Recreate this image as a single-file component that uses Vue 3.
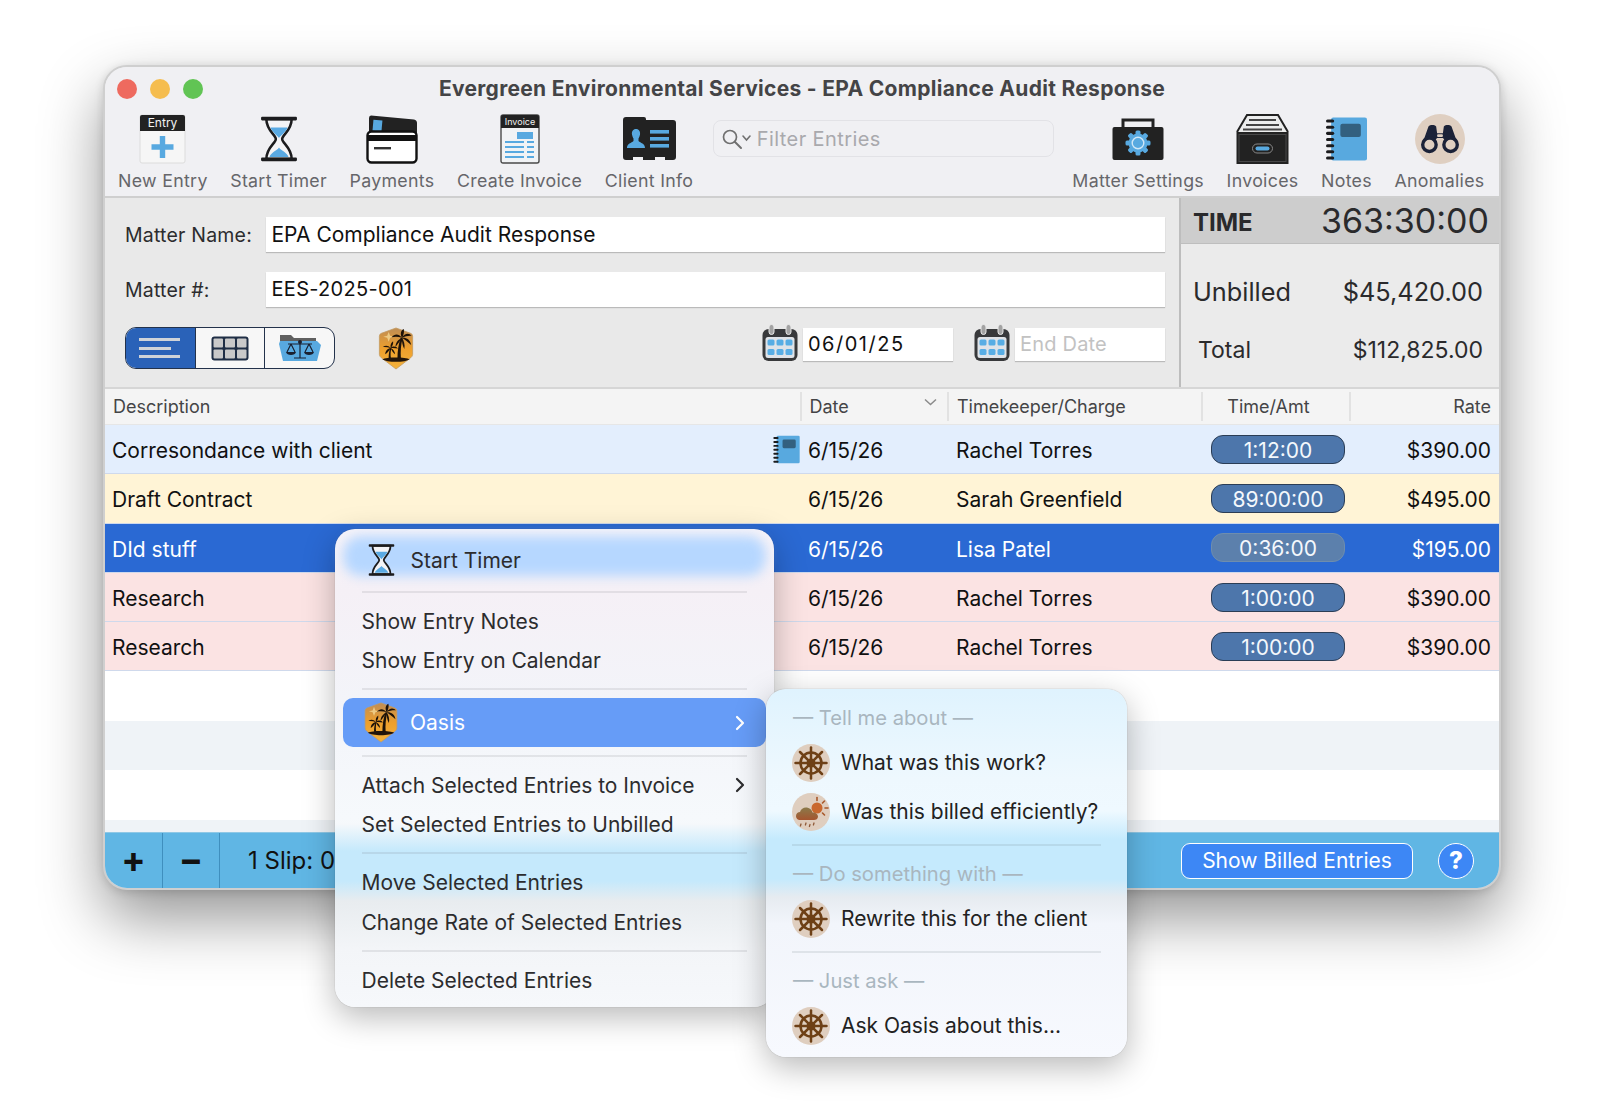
<template>
  <div class="page">
    <svg class="sprites" width="0" height="0" aria-hidden="true">
      <defs>
        <linearGradient id="shieldFill" x1="0" y1="0" x2="0" y2="1">
          <stop offset="0" stop-color="#bf8d55" />
          <stop offset="0.5" stop-color="#ee9f2c" />
          <stop offset="1" stop-color="#f3b23c" />
        </linearGradient>
        <linearGradient id="cloudFill" x1="0" y1="0" x2="0" y2="1">
          <stop offset="0" stop-color="#8a7a4a" />
          <stop offset="1" stop-color="#a5552f" />
        </linearGradient>
        <symbol id="hourglass" viewBox="0 0 36 44">
          <path d="M6 3C6 14 15 18 15 22C15 26 6 30 6 41H30C30 30 21 26 21 22C21 18 30 14 30 3Z" fill="#f4f4f6" stroke="#1c1c1e" stroke-width="2.4" />
          <path d="M10 11H26C25 15 20 18 18 21C16 18 11 15 10 11Z" fill="#5aaae3" />
          <path d="M9 39C10 35 16 33 18 30C20 33 26 35 27 39Z" fill="#5aaae3" />
          <rect x="1" y="1" width="34" height="3.4" rx="1" fill="#1c1c1e" />
          <rect x="1" y="39.6" width="34" height="3.4" rx="1" fill="#1c1c1e" />
        </symbol>
        <symbol id="palm" viewBox="0 0 36 44">
          <path d="M18 1L33 6.500Q35 7.200 35 9.500V28Q35 30 33 31.500L18 43L3 31.500Q1 30 1 28V9.500Q1 7.200 3 6.500Z" fill="url(#shieldFill)" stroke="#c29a62" stroke-width="0.800" />
          <path d="M9 9L10.500 5L12 9L16 10L12 11L10.500 15L9 11L5 10Z" fill="#f6dc9a" opacity="0.75" />
          <path d="M4 33C8 30.500 28 30.500 32 33C28 36.500 8 36.500 4 33Z" fill="#21140a" />
          <path d="M19.500 32C19.500 25 20.500 17 23 11L24.800 11.500C23 18 22.500 25 23 32Z" fill="#1d1209" />
          <path d="M24 11C20.500 6.500 16.500 7 13.500 10.500C17.500 9.500 21 10 24 11ZM24 11C22 6.500 23 3.500 26 2C26.500 5 26 8.500 24 11ZM24 11C27 6 31.500 6 34 9C30.500 8.800 27 9.500 24 11ZM24 11C28.500 10.500 33 13 33.500 18.500C30.500 15.500 27 13 24 11ZM24 11C21 12.500 17.500 15.500 17.500 20.500C20 17 22.500 14 24 11ZM24 11C26 14 27.500 18 26.500 22.500C24.500 19 24 15 24 11Z" fill="#1d1209" />
          <path d="M10.500 32C10.500 28 11 25 12 21.500L13.300 21.900C12.300 25 12.300 28.500 12.800 32Z" fill="#1d1209" />
          <path d="M12.500 21.500C10 18.500 7 18.500 4.500 20.500C7.500 20.300 10 20.700 12.500 21.500ZM12.500 21.500C12 18 13 16 15 14.500C15.500 17 14.500 19.500 12.500 21.500ZM12.500 21.500C15 19 18.500 19.800 20 22C17.500 21.500 15 21.300 12.500 21.500ZM12.500 21.500C9.500 22 7 24.500 7 28C9.500 26 11.500 24 12.500 21.500ZM12.500 21.500C15 22.500 17 25 17 28C15 26.500 13.500 24 12.500 21.500Z" fill="#1d1209" />
        </symbol>
        <symbol id="notes" viewBox="0 0 40 44">
          <rect x="5" y="1" width="35" height="42" rx="2" fill="#58a9df" />
          <rect x="14" y="7" width="20" height="13" rx="2" fill="#33607f" />
          <g fill="#1c1c1e">
            <rect x="0" y="3" width="8" height="3" rx="1.5" />
            <rect x="0" y="9" width="8" height="3" rx="1.5" />
            <rect x="0" y="15" width="8" height="3" rx="1.5" />
            <rect x="0" y="21" width="8" height="3" rx="1.5" />
            <rect x="0" y="27" width="8" height="3" rx="1.5" />
            <rect x="0" y="33" width="8" height="3" rx="1.5" />
            <rect x="0" y="39" width="8" height="3" rx="1.5" />
          </g>
        </symbol>
        <symbol id="calendar" viewBox="0 0 36 37">
          <rect x="0.5" y="5" width="35" height="32" rx="6" fill="#38393b" />
          <rect x="3.5" y="13" width="29" height="21" rx="2.5" fill="#dfe3e8" />
          <rect x="7" y="0.5" width="5" height="10" rx="2.5" fill="#a3a3a3" stroke="#e9e9e9" />
          <rect x="24" y="0.5" width="5" height="10" rx="2.5" fill="#a3a3a3" stroke="#e9e9e9" />
          <g fill="#58ade4">
            <rect x="5.5" y="15.5" width="7" height="6" rx="1.5" />
            <rect x="14.5" y="15.5" width="7" height="6" rx="1.5" />
            <rect x="23.5" y="15.5" width="7" height="6" rx="1.5" />
            <rect x="5.5" y="25" width="7" height="6" rx="1.5" />
            <rect x="14.5" y="25" width="7" height="6" rx="1.5" />
            <rect x="23.5" y="25" width="7" height="6" rx="1.5" />
          </g>
        </symbol>
        <symbol id="wheel" viewBox="0 0 38 38">
          <circle cx="19" cy="19" r="19" fill="#dfcebf" />
          <g stroke="#6e4016" stroke-width="2.5" fill="none" stroke-linecap="round">
            <circle cx="19" cy="19" r="10.5" />
            <line x1="19" y1="3.5" x2="19" y2="34.5" />
            <line x1="3.5" y1="19" x2="34.5" y2="19" />
            <line x1="8" y1="8" x2="30" y2="30" />
            <line x1="30" y1="8" x2="8" y2="30" />
          </g>
          <circle cx="19" cy="19" r="4.500" fill="#6e4016" />
        </symbol>
        <symbol id="weather" viewBox="0 0 38 38">
          <circle cx="19" cy="19" r="19" fill="#dfcebf" />
          <circle cx="25" cy="15" r="5.5" fill="#c9682e" />
          <g stroke="#a8582a" stroke-width="1.6" stroke-linecap="round">
            <line x1="25" y1="4.5" x2="25" y2="7.5" />
            <line x1="32.5" y1="8" x2="30.5" y2="10" />
            <line x1="36" y1="15" x2="33" y2="15" />
            <line x1="32.5" y1="22" x2="30.5" y2="20" />
          </g>
          <path d="M8 27C5 27 4 24.500 4 23C4 20.500 6 19 8 19C9 15.500 12 14 15 14.500C18 15 20 17 20.500 19.500C23 19 26 21 26 23.500C26 26 24 27 22 27Z" fill="url(#cloudFill)" />
          <g stroke="#8f5a38" stroke-width="1.300" stroke-linecap="round">
            <line x1="9" y1="31" x2="8.400" y2="33" />
            <line x1="14" y1="30" x2="13.400" y2="32" />
            <line x1="18" y1="31.500" x2="17.400" y2="33.500" />
            <line x1="22" y1="30" x2="21.400" y2="32" />
          </g>
        </symbol>
      </defs>
    </svg>

    <div class="window">
      <header class="chrome">
        <div class="titlebar">
          <div class="lights">
            <span class="light light-red"></span>
            <span class="light light-yellow"></span>
            <span class="light light-green"></span>
          </div>
          <div class="title">Evergreen Environmental Services - EPA Compliance Audit Response</div>
        </div>
        <div class="toolbar">
          <div class="tool">
            <svg class="tool-icon" width="47" height="50" viewBox="0 0 47 50">
              <rect x="1" y="1" width="45" height="48" rx="2" fill="#f6f6f6" stroke="#dcdcdc" />
              <path d="M1 3a2 2 0 0 1 2-2h41a2 2 0 0 1 2 2v14H1Z" fill="#222" />
              <text x="23.500" y="13" text-anchor="middle" class="icon-text entry-text">Entry</text>
              <path d="M20.800 22h5.400v8.300h8.300v5.400h-8.300V44h-5.400v-8.300h-8.300v-5.400h8.300Z" fill="#58a9e0" />
            </svg>
            <span>New Entry</span>
          </div>
          <div class="tool">
            <svg class="tool-icon" width="38" height="46"><use href="#hourglass" /></svg>
            <span>Start Timer</span>
          </div>
          <div class="tool">
            <svg class="tool-icon" width="52" height="50" viewBox="0 0 52 50">
              <path d="M5 1.500L48 5.500Q51 6 51 9V26H3V4Q3 1.500 5 1.500Z" fill="#222" />
              <rect x="7" y="6" width="9" height="11" fill="#58a9e0" transform="rotate(5 11 11)" />
              <rect x="1.500" y="17.500" width="49" height="31" rx="4" fill="#fff" stroke="#111" stroke-width="2.400" />
              <rect x="1.500" y="21" width="49" height="6" fill="#111" />
              <rect x="8" y="33" width="17" height="2.400" fill="#333" />
            </svg>
            <span>Payments</span>
          </div>
          <div class="tool">
            <svg class="tool-icon" width="40" height="50" viewBox="0 0 40 50">
              <rect x="1" y="1" width="38" height="48" rx="2" fill="#f1f3f5" stroke="#4a4a4a" stroke-width="1.400" />
              <path d="M1 3a2 2 0 0 1 2-2h34a2 2 0 0 1 2 2v11H1Z" fill="#222" />
              <text x="20" y="11" text-anchor="middle" class="icon-text invoice-text">Invoice</text>
              <rect x="17" y="18" width="16" height="7" fill="#58a9e0" />
              <g fill="#58a9e0">
                <rect x="5" y="27" width="19" height="2" />
                <rect x="27" y="27" width="7" height="2" />
                <rect x="5" y="32" width="19" height="2" />
                <rect x="27" y="32" width="7" height="2" />
                <rect x="5" y="37" width="19" height="2" />
                <rect x="27" y="37" width="7" height="2" />
                <rect x="5" y="42" width="19" height="2" />
                <rect x="27" y="42" width="7" height="2" />
              </g>
            </svg>
            <span>Create Invoice</span>
          </div>
          <div class="tool">
            <svg class="tool-icon" width="53" height="44" viewBox="0 0 53 44">
              <path d="M3 0H21Q23 0 23 2V3H50Q53 3 53 6V40Q53 43 50 43H42V40H32V43H20V40H10V43H3Q0 43 0 40V3Q0 0 3 0Z" fill="#222" />
              <path d="M13 12C16 12 17.500 14.500 17 17.500C16.800 19 16 20.500 15.500 21.500V24C17.500 26 22 26.500 22 31H4C4 26.500 8.500 26 10.500 24V21.500C10 20.500 9.200 19 9 17.500C8.500 14.500 10 12 13 12Z" fill="#58a9e0" />
              <rect x="27" y="13" width="19" height="3.600" fill="#58a9e0" />
              <rect x="27" y="20" width="19" height="3.600" fill="#58a9e0" />
              <rect x="27" y="27" width="19" height="3.600" fill="#58a9e0" />
            </svg>
            <span>Client Info</span>
          </div>
          <div class="search">
            <svg width="32" height="22" viewBox="0 0 32 22">
              <circle cx="9" cy="9" r="6.500" fill="none" stroke="#707070" stroke-width="1.700" />
              <line x1="14" y1="14" x2="20" y2="20" stroke="#707070" stroke-width="2" stroke-linecap="round" />
              <path d="M22 8l3.500 4 3.500-4" fill="none" stroke="#707070" stroke-width="1.600" stroke-linecap="round" />
            </svg>
            <span>Filter Entries</span>
          </div>
          <div class="tool">
            <svg class="tool-icon" width="52" height="42" viewBox="0 0 52 42">
              <path d="M11 10V2H41V10" fill="none" stroke="#222" stroke-width="3" />
              <rect x="0.500" y="9" width="51" height="33" rx="2" fill="#222" />
              <g fill="#58a9e0">
                <circle cx="26" cy="25" r="9.500" />
                <rect x="23.500" y="12.500" width="5" height="25" rx="1.500" />
                <rect x="13.500" y="22.500" width="25" height="5" rx="1.500" />
                <rect x="23.500" y="12.500" width="5" height="25" rx="1.500" transform="rotate(45 26 25)" />
                <rect x="23.500" y="12.500" width="5" height="25" rx="1.500" transform="rotate(-45 26 25)" />
              </g>
              <circle cx="26" cy="25" r="5.800" fill="#58a9e0" stroke="#cfe7f7" stroke-width="1.400" />
            </svg>
            <span>Matter Settings</span>
          </div>
          <div class="tool">
            <svg class="tool-icon" width="53" height="50" viewBox="0 0 53 50">
              <path d="M1 18L11 1H42L52 18" fill="#eceded" stroke="#222" stroke-width="2" />
              <g fill="#444">
                <rect x="13" y="5" width="27" height="2" />
                <rect x="10" y="10" width="33" height="2" />
                <rect x="7" y="14.500" width="39" height="2" />
              </g>
              <rect x="0.500" y="18" width="52" height="32" fill="#222" />
              <rect x="3" y="20.500" width="47" height="27" fill="none" stroke="#484848" />
              <rect x="16.500" y="30" width="20" height="9" rx="4.500" fill="#222" stroke="#888" />
              <rect x="19.500" y="32.500" width="14" height="4" rx="2" fill="#58a9e0" />
            </svg>
            <span>Invoices</span>
          </div>
          <div class="tool">
            <svg class="tool-icon" width="41" height="44"><use href="#notes" /></svg>
            <span>Notes</span>
          </div>
          <div class="tool">
            <svg class="tool-icon" width="52" height="52" viewBox="0 0 52 52">
              <circle cx="26" cy="26" r="26" fill="#dfcfc1" />
              <g fill="#1b2238">
                <path d="M14 13C16 11 20 11 22 13L23 20H29L30 13C32 11 36 11 38 13L44 30H34L29 25H23L18 30H8Z" />
              </g>
              <circle cx="15" cy="32" r="7" fill="#dfcfc1" stroke="#1b2238" stroke-width="3.500" />
              <circle cx="37" cy="32" r="7" fill="#dfcfc1" stroke="#1b2238" stroke-width="3.500" />
              <rect x="23" y="21" width="6" height="3" rx="1" fill="#dfcfc1" />
            </svg>
            <span>Anomalies</span>
          </div>
        </div>
      </header>

      <section class="matter">
        <div class="matter-form">
          <div class="form-row">
            <label>Matter Name:</label>
            <div class="field big">EPA Compliance Audit Response</div>
          </div>
          <div class="form-row">
            <label>Matter #:</label>
            <div class="field mono">EES-2025-001</div>
          </div>
          <div class="form-tools">
            <div class="segments">
              <div class="segment active">
                <svg width="42" height="24" viewBox="0 0 42 24">
                  <g fill="#cfd3d8">
                    <rect x="0" y="2" width="41" height="3" />
                    <rect x="0" y="11" width="32" height="3" />
                    <rect x="0" y="19" width="41" height="3" />
                  </g>
                </svg>
              </div>
              <div class="segment">
                <svg width="40" height="27" viewBox="0 0 40 27">
                  <rect x="1.500" y="1.500" width="37" height="24" rx="3" fill="#1f2e45" />
                  <g fill="#c9c9c9">
                    <rect x="3.500" y="3.500" width="9.500" height="9" rx="1" />
                    <rect x="15" y="3.500" width="10" height="9" rx="1" />
                    <rect x="27" y="3.500" width="9.500" height="9" rx="1" />
                    <rect x="3.500" y="14.500" width="9.500" height="9" rx="1" />
                    <rect x="15" y="14.500" width="10" height="9" rx="1" />
                    <rect x="27" y="14.500" width="9.500" height="9" rx="1" />
                  </g>
                </svg>
              </div>
              <div class="segment">
                <svg width="42" height="28" viewBox="0 0 42 28">
                  <path d="M1 1H12L15 4H37V10H1Z" fill="#5f5f5f" />
                  <path d="M1 7H38L42 11L38 27H4L0 10Z" fill="#58a9e0" />
                  <g stroke="#1a2030" stroke-width="1.200" fill="none">
                    <line x1="9" y1="10" x2="33" y2="10" />
                    <line x1="21" y1="8" x2="21" y2="24" />
                    <line x1="15" y1="24" x2="27" y2="24" />
                    <path d="M12 10L8 18M12 10L16 18M30 10L26 18M30 10L34 18" />
                  </g>
                  <path d="M7 18H17C16.500 22 7.500 22 7 18ZM25 18H35C34.500 22 25.500 22 25 18Z" fill="#1a2030" />
                  <circle cx="21" cy="8" r="2" fill="#1a2030" />
                </svg>
              </div>
            </div>
            <svg class="oasis-badge" width="36" height="43"><use href="#palm" /></svg>
            <div class="dates">
              <svg width="36" height="37"><use href="#calendar" /></svg>
              <div class="date-field">06/01/25</div>
              <svg class="cal-two" width="36" height="37"><use href="#calendar" /></svg>
              <div class="date-field empty">End Date</div>
            </div>
          </div>
        </div>
        <aside class="totals">
          <div class="time-bar">
            <span class="time-label">TIME</span>
            <span class="time-value">363:30:00</span>
          </div>
          <div class="total-row unbilled">
            <span>Unbilled</span>
            <span>$45,420.00</span>
          </div>
          <div class="total-row grand">
            <span>Total</span>
            <span>$112,825.00</span>
          </div>
        </aside>
      </section>

      <section class="table">
        <div class="thead">
          <div class="th">Description</div>
          <div class="th sep">
            Date
            <svg class="sort" width="13" height="8" viewBox="0 0 13 8"><path d="M1 1.500l5.500 5 5.500-5" fill="none" stroke="#8b8b8b" stroke-width="1.500" /></svg>
          </div>
          <div class="th sep">Timekeeper/Charge</div>
          <div class="th sep center">Time/Amt</div>
          <div class="th sep right">Rate</div>
        </div>
        <div v-for="row in rows" :key="row.id" class="tr" :class="row.tone">
          <div class="td desc">
            <span>{{ row.desc }}</span>
            <svg v-if="row.note" width="27" height="29"><use href="#notes" /></svg>
          </div>
          <div class="td date">{{ row.date }}</div>
          <div class="td keeper">{{ row.keeper }}</div>
          <div class="td amount"><span class="pill">{{ row.time }}</span></div>
          <div class="td rate">{{ row.rate }}</div>
        </div>
        <div class="blank"></div>
        <div class="blank alt"></div>
        <div class="blank"></div>
        <div class="blank alt"></div>
      </section>

      <footer class="statusbar">
        <div class="stat-btn">+</div>
        <div class="stat-btn minus">−</div>
        <div class="slip-count">1 Slip: 0:36:00</div>
        <button class="billed-btn">Show Billed Entries</button>
        <button class="help-btn">?</button>
      </footer>
    </div>

    <div class="menu">
      <div class="menu-item tall">
        <svg class="menu-glass" width="27" height="34"><use href="#hourglass" /></svg>
        <span>Start Timer</span>
      </div>
      <div class="menu-sep"></div>
      <div class="menu-item">Show Entry Notes</div>
      <div class="menu-item">Show Entry on Calendar</div>
      <div class="menu-sep"></div>
      <div class="menu-item oasis">
        <svg class="menu-palm" width="34" height="41"><use href="#palm" /></svg>
        <span>Oasis</span>
        <svg class="chev" width="11" height="16" viewBox="0 0 11 16"><path d="M2 2l6 6-6 6" fill="none" stroke="currentColor" stroke-width="2.200" stroke-linecap="round" stroke-linejoin="round" /></svg>
      </div>
      <div class="menu-sep"></div>
      <div class="menu-item">
        <span>Attach Selected Entries to Invoice</span>
        <svg class="chev" width="11" height="16" viewBox="0 0 11 16"><path d="M2 2l6 6-6 6" fill="none" stroke="currentColor" stroke-width="2.200" stroke-linecap="round" stroke-linejoin="round" /></svg>
      </div>
      <div class="menu-item">Set Selected Entries to Unbilled</div>
      <div class="menu-sep"></div>
      <div class="menu-item">Move Selected Entries</div>
      <div class="menu-item">Change Rate of Selected Entries</div>
      <div class="menu-sep"></div>
      <div class="menu-item">Delete Selected Entries</div>
    </div>

    <div class="submenu">
      <template v-for="(group, i) in oasisGroups" :key="group.title">
        <div v-if="i > 0" class="sub-sep"></div>
        <div class="sub-head">— {{ group.title }} —</div>
        <div v-for="item in group.items" :key="item.label" class="sub-item">
          <svg width="38" height="38"><use :href="'#' + item.icon" /></svg>
          <span>{{ item.label }}</span>
        </div>
      </template>
    </div>
  </div>
</template>

<script setup>
const rows = [
  { id: 1, tone: 'row-blue', desc: 'Corresondance with client', note: true, date: '6/15/26', keeper: 'Rachel Torres', time: '1:12:00', rate: '$390.00' },
  { id: 2, tone: 'row-yellow', desc: 'Draft Contract', date: '6/15/26', keeper: 'Sarah Greenfield', time: '89:00:00', rate: '$495.00' },
  { id: 3, tone: 'row-selected', desc: 'DId stuff', date: '6/15/26', keeper: 'Lisa Patel', time: '0:36:00', rate: '$195.00' },
  { id: 4, tone: 'row-pink', desc: 'Research', date: '6/15/26', keeper: 'Rachel Torres', time: '1:00:00', rate: '$390.00' },
  { id: 5, tone: 'row-pink', desc: 'Research', date: '6/15/26', keeper: 'Rachel Torres', time: '1:00:00', rate: '$390.00' }
]

const oasisGroups = [
  {
    title: 'Tell me about',
    items: [
      { label: 'What was this work?', icon: 'wheel' },
      { label: 'Was this billed efficiently?', icon: 'weather' }
    ]
  },
  {
    title: 'Do something with',
    items: [{ label: 'Rewrite this for the client', icon: 'wheel' }]
  },
  {
    title: 'Just ask',
    items: [{ label: 'Ask Oasis about this...', icon: 'wheel' }]
  }
]
</script>

<style>
html,
body {
  margin: 0;
  background: #fff;
}
</style>

<style scoped>
.page {
  position: relative;
  width: 1600px;
  height: 1112px;
  overflow: hidden;
  padding: 65px 0 0 103px;
  box-sizing: border-box;
  font-family: Inter, "Liberation Sans", sans-serif;
  color: #1c1c1e;
  background: #fff;
}

.sprites {
  position: absolute;
}

.window {
  width: 1398px;
  height: 825px;
  box-sizing: border-box;
  display: flex;
  flex-direction: column;
  background: #f0f0f3;
  border: 2px solid #cfcfcf;
  border-radius: 24px;
  overflow: hidden;
  box-shadow: 0 28px 62px rgba(0, 0, 0, 0.42), 0 2px 10px rgba(0, 0, 0, 0.14);
}

.chrome {
  height: 131px;
  flex-shrink: 0;
  background: #f0f0f3;
  border-bottom: 2px solid #cfcfcf;
  box-sizing: border-box;
}

.titlebar {
  position: relative;
  height: 46px;
  padding-bottom: 3px;
  box-sizing: border-box;
  display: flex;
  align-items: center;
  justify-content: center;
}

.lights {
  position: absolute;
  left: 12px;
  top: 12px;
  display: flex;
  gap: 13px;
}

.light {
  width: 20px;
  height: 20px;
  border-radius: 50%;
}

.light-red {
  background: #ee6a5f;
}

.light-yellow {
  background: #f5bd4f;
}

.light-green {
  background: #61c454;
}

.title {
  font-size: 21px;
  font-weight: 700;
  color: #444446;
  letter-spacing: 0.3px;
}

.toolbar {
  display: flex;
  align-items: flex-start;
  gap: 22.500px;
  padding: 1px 0 0 13px;
}

.tool {
  display: flex;
  flex-direction: column;
  align-items: center;
  flex-shrink: 0;
  height: 82px;
  font-size: 17.800px;
  letter-spacing: 0.3px;
  color: #66666a;
  white-space: nowrap;
}

.tool-icon {
  height: 50px;
  margin-bottom: 6px;
}

.icon-text {
  fill: #f2f2f2;
  font-family: Inter, "Liberation Sans", sans-serif;
  letter-spacing: 0;
}

.entry-text {
  font-size: 12px;
}

.invoice-text {
  font-size: 9px;
}

.search {
  width: 341px;
  flex-shrink: 0;
  height: 37px;
  margin: 6px -4px 0 -3px;
  box-sizing: border-box;
  border: 1px solid #e2e2e6;
  border-radius: 8px;
  display: flex;
  align-items: center;
  gap: 4px;
  padding-left: 7px;
  font-size: 20px;
  letter-spacing: 0.4px;
  color: #a9a9ad;
}

.matter {
  height: 189px;
  flex-shrink: 0;
  display: flex;
  background: #e9e9e9;
}

.matter-form {
  flex: 1;
  min-width: 0;
  padding: 19px 14px 0 20px;
}

.form-row {
  display: flex;
  align-items: center;
  height: 35px;
  margin-bottom: 20px;
}

.form-row label {
  width: 140.500px;
  flex-shrink: 0;
  font-size: 19.500px;
  letter-spacing: 0.2px;
  color: #2c2c2e;
}

.field {
  flex: 1;
  height: 35px;
  line-height: 35px;
  padding-left: 6px;
  background: #fff;
  box-shadow: 0 1px 1px rgba(0, 0, 0, 0.2);
  font-size: 21px;
  color: #111;
}

.mono {
  letter-spacing: 0.3px;
  font-size: 20px;
}

.form-tools {
  display: flex;
  align-items: center;
  height: 42px;
  margin-top: 1px;
}

.segments {
  display: flex;
  width: 210px;
  height: 42px;
  box-sizing: border-box;
  border: 1.500px solid #23324b;
  border-radius: 11px;
  overflow: hidden;
  background: #f7f7f7;
}

.segment {
  flex: 1;
  display: flex;
  align-items: center;
  justify-content: center;
  border-left: 1.500px solid #23324b;
}

.segment:first-child {
  border-left: 0;
}

.segment.active {
  background: #2a62b8;
}

.oasis-badge {
  margin-left: 43px;
}

.dates {
  align-self: flex-start;
  margin: -3px 0 0 auto;
  display: flex;
  align-items: flex-end;
}

.date-field {
  width: 150px;
  height: 33px;
  line-height: 33px;
  margin-left: 5px;
  padding-left: 5px;
  box-sizing: border-box;
  background: #fff;
  box-shadow: 0 1px 1px rgba(0, 0, 0, 0.2);
  font-size: 20px;
  letter-spacing: 1.500px;
  color: #111;
}

.date-field.empty {
  letter-spacing: 0.2px;
  color: #c2c2c2;
}

.cal-two {
  margin-left: 21px;
}

.totals {
  width: 320px;
  flex-shrink: 0;
  box-sizing: border-box;
  border-left: 2px solid #bdbdbd;
  background: #ebebeb;
}

.time-bar {
  height: 46px;
  display: flex;
  align-items: center;
  justify-content: space-between;
  padding: 0 10px 0 12px;
  background: #cdcdcd;
  border-bottom: 1px solid #bebebe;
  box-sizing: border-box;
}

.time-label {
  padding-top: 3px;
  font-size: 24px;
  font-weight: 700;
  color: #2a2a2c;
}

.time-value {
  font-size: 34px;
  color: #2a2a2c;
}

.total-row {
  display: flex;
  justify-content: space-between;
  color: #2a2a2c;
}

.unbilled {
  margin-top: 32px;
  padding: 0 16px 0 12px;
  font-size: 25.300px;
}

.grand {
  margin-top: 29px;
  padding: 0 16px 0 17px;
  font-size: 23px;
}

.table {
  height: 445px;
  flex-shrink: 0;
  overflow: hidden;
  background: #fff;
}

.thead,
.tr {
  display: grid;
  grid-template-columns: 694.500px 147.500px 253.500px 148px 1fr;
}

.thead {
  height: 38px;
  background: #f4f4f4;
  border-top: 2px solid #d6d6d6;
  border-bottom: 1px solid #e6e6e6;
  box-sizing: border-box;
}

.th {
  position: relative;
  display: flex;
  align-items: center;
  padding-left: 8px;
  font-size: 18px;
  color: #444446;
}

.th.sep {
  border-left: 2px solid #e2e2e2;
  margin: 3px 0;
}

.th.center {
  justify-content: center;
  padding: 0 14px 0 0;
}

.th.right {
  justify-content: flex-end;
  padding: 0 8px 0 0;
}

.sort {
  position: absolute;
  right: 10px;
  top: 6px;
}

.tr {
  height: 49.300px;
  box-sizing: border-box;
  border-bottom: 1.500px solid #cfd9ec;
  font-size: 21px;
  color: #111;
}

.row-blue {
  background: #e3eefd;
}

.row-yellow {
  background: #fff4d6;
}

.row-pink {
  background: #fbe3e3;
}

.row-selected {
  background: #2a69d3;
  color: #fff;
}

.td {
  display: flex;
  align-items: center;
  padding-top: 3px;
}

.desc {
  justify-content: space-between;
  padding-left: 7px;
}

.desc svg {
  margin-top: -3px;
}

.date {
  padding-left: 8.500px;
}

.keeper {
  padding-left: 9px;
}

.amount {
  padding: 0 0 0 10.500px;
}

.rate {
  justify-content: flex-end;
  padding-right: 8px;
}

.pill {
  width: 134px;
  height: 29px;
  line-height: 29px;
  box-sizing: border-box;
  border: 1.500px solid #2b3d55;
  border-radius: 12px;
  background: #4d76ab;
  color: #f4f8fc;
  text-align: center;
  font-size: 21px;
}

.row-selected .pill {
  background: #5c80ac;
  border-color: #6e8dae;
}

.blank {
  height: 49.500px;
  background: #fff;
}

.blank.alt {
  background: #eff3f7;
}

.statusbar {
  flex: 1;
  display: flex;
  align-items: center;
  background: #60b6e4;
  border-top: 1px solid #8fc8e6;
  padding-right: 25px;
}

.stat-btn {
  width: 58px;
  height: 100%;
  padding-bottom: 4px;
  display: flex;
  align-items: center;
  justify-content: center;
  border-right: 1.500px solid #3f8fbe;
  box-sizing: border-box;
  font-size: 36px;
  font-weight: 700;
  color: #111;
}

.stat-btn.minus {
  width: 57px;
}

.slip-count {
  margin-left: 28px;
  font-size: 24px;
  color: #111;
}

.billed-btn {
  margin-left: auto;
  width: 232px;
  height: 36px;
  border: 1.500px solid #fff;
  border-radius: 9px;
  background: #3d87f5;
  color: #fff;
  font-family: inherit;
  font-size: 21px;
  padding: 0;
}

.help-btn {
  width: 36px;
  height: 36px;
  margin-left: 25px;
  padding: 0;
  border: 1.500px solid #fff;
  border-radius: 50%;
  background: #3d87f5;
  color: #fff;
  font-family: inherit;
  font-size: 24px;
  font-weight: 800;
}

.menu {
  position: absolute;
  z-index: 1;
  left: 335px;
  top: 529px;
  width: 439px;
  box-sizing: border-box;
  padding: 8px 0 7px;
  border-radius: 20px;
  color: #2c2c2e;
  box-shadow: 0 10px 32px rgba(0, 0, 0, 0.28), 0 0 1px rgba(0, 0, 0, 0.4);
  background: linear-gradient(
    180deg,
    #f6f3f9 0,
    #f5f0f6 62px,
    #f3f4f9 170px,
    #f6f9fc 290px,
    #f5f8fb 295px,
    #c5e9fc 322px,
    #c5e9fc 352px,
    #e8ecef 372px,
    #f3f5f8 420px,
    #f6f8fb 478px
  );
}

.menu::before {
  content: "";
  position: absolute;
  z-index: -1;
  left: 8px;
  right: 8px;
  top: 7px;
  height: 40px;
  border-radius: 18px;
  background: #b6d7ff;
  filter: blur(6px);
}

.menu-item {
  display: flex;
  align-items: center;
  height: 39.500px;
  padding: 0 26.500px;
  font-size: 21px;
  white-space: nowrap;
}

.menu-item.tall {
  height: 46px;
}

.menu-glass {
  margin: 0 16px 0 6px;
}

.menu-sep {
  height: 2px;
  margin: 7.500px 27px 9px;
  background: rgba(100, 100, 110, 0.13);
}

.oasis {
  height: 49px;
  margin: -1px 8px 0;
  padding: 0 19px 0 21px;
  border-radius: 10px;
  background: #669cf7;
  color: #fff;
}

.menu-palm {
  margin: 0 12px 0 0;
}

.chev {
  margin: 0 1.500px 0 auto;
}

.submenu {
  position: absolute;
  z-index: 2;
  left: 766px;
  top: 689px;
  width: 361px;
  box-sizing: border-box;
  padding: 14px 26px 7px;
  border-radius: 20px;
  color: #222;
  box-shadow: 0 10px 32px rgba(0, 0, 0, 0.28), 0 0 1px rgba(0, 0, 0, 0.4);
  background: linear-gradient(
    180deg,
    #dff3fe 0,
    #eef8fe 90px,
    #eff9ff 122px,
    #c5eafd 150px,
    #c5eafd 190px,
    #e6ebf0 208px,
    #f2f5fb 235px,
    #f7f9fe 368px
  );
}

.sub-head {
  height: 30px;
  line-height: 30px;
  margin: 0 0 5px 1px;
  font-size: 20.200px;
  color: #a9b6bf;
}

.sub-item {
  display: flex;
  align-items: center;
  gap: 11px;
  height: 49px;
  font-size: 21px;
  white-space: nowrap;
}

.sub-sep {
  height: 2px;
  margin: 8px 0 13px;
  background: rgba(100, 110, 120, 0.14);
}
</style>
